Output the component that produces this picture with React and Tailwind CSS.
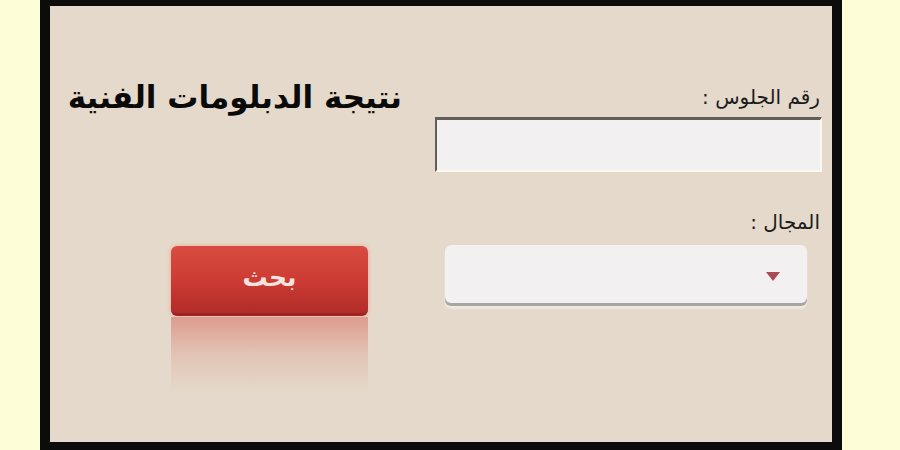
export default function App() {
  return (
    <div className="w-[900px] h-[450px] bg-[#fdfdd7] overflow-hidden" style={{ fontFamily: '"DejaVu Sans", sans-serif' }}>
      {/* Black frame */}
      <div className="ml-[40px] w-[802px] h-[450px] bg-[#0c0c0c] pt-[6px] px-[10px] pb-[8px]">
        <div className="w-full h-full bg-[#e4d9ca] flex">
          {/* Left column: title + button */}
          <div className="w-[385px] flex flex-col">
            <div dir="rtl" className="pt-[70px] h-[112px] pr-[33px] text-right text-[31px] leading-[42px] font-bold text-[#0a0a0a] whitespace-nowrap">
              نتيجة الدبلومات الفنية
            </div>
            <div className="mt-[128px] ml-[121px] w-[197px]">
              <button className="w-[197px] h-[70px] rounded-[6px] bg-gradient-to-b from-[#d94c41] via-[#cc3c34] to-[#b22c28] border-b-[3px] border-[#9c2422] shadow-[0_0_4px_#f2a595] flex items-center justify-center">
                <span dir="rtl" className="text-[25px] font-bold text-[#f4e4de] leading-none -mt-[4px]">بحث</span>
              </button>
              <div className="mt-[1px] w-[197px] h-[76px] bg-gradient-to-b from-[#dd9c8e] via-[#e2c4b6] to-[#e4d9ca]" />
            </div>
          </div>

          {/* Right column: fields */}
          <div className="w-[387px] flex flex-col">
            <div dir="rtl" className="pt-[76px] pr-[2px] text-[20px] leading-[30px] text-[#1c1c1c]">
              رقم الجلوس :
            </div>
            <div className="mt-[5px] h-[55px] w-[387px] bg-[#f2f0f0] border-t-[3px] border-l-[2px] border-[#625d59] border-r-[2px] border-r-[#fbfaf0] border-b-[2px] border-b-[#fbfaee]" />
            <div dir="rtl" className="mt-[35px] pr-[2px] text-[20px] leading-[30px] text-[#1c1c1c]">
              المجال :
            </div>
            <div className="mt-[8px] ml-[10px] w-[362px] h-[58px] rounded-[6px] bg-[#f2f0f0] shadow-[0_3px_0_#aaa5a1,0_6px_2px_#efe9e0] flex items-center justify-end pr-[27px]">
              <svg width="14" height="9" viewBox="0 0 14 9" className="mt-[4px]">
                <path d="M0 0H14L7 9Z" fill="#a84a55" />
              </svg>
            </div>
          </div>
        </div>
      </div>
    </div>
  );
}
